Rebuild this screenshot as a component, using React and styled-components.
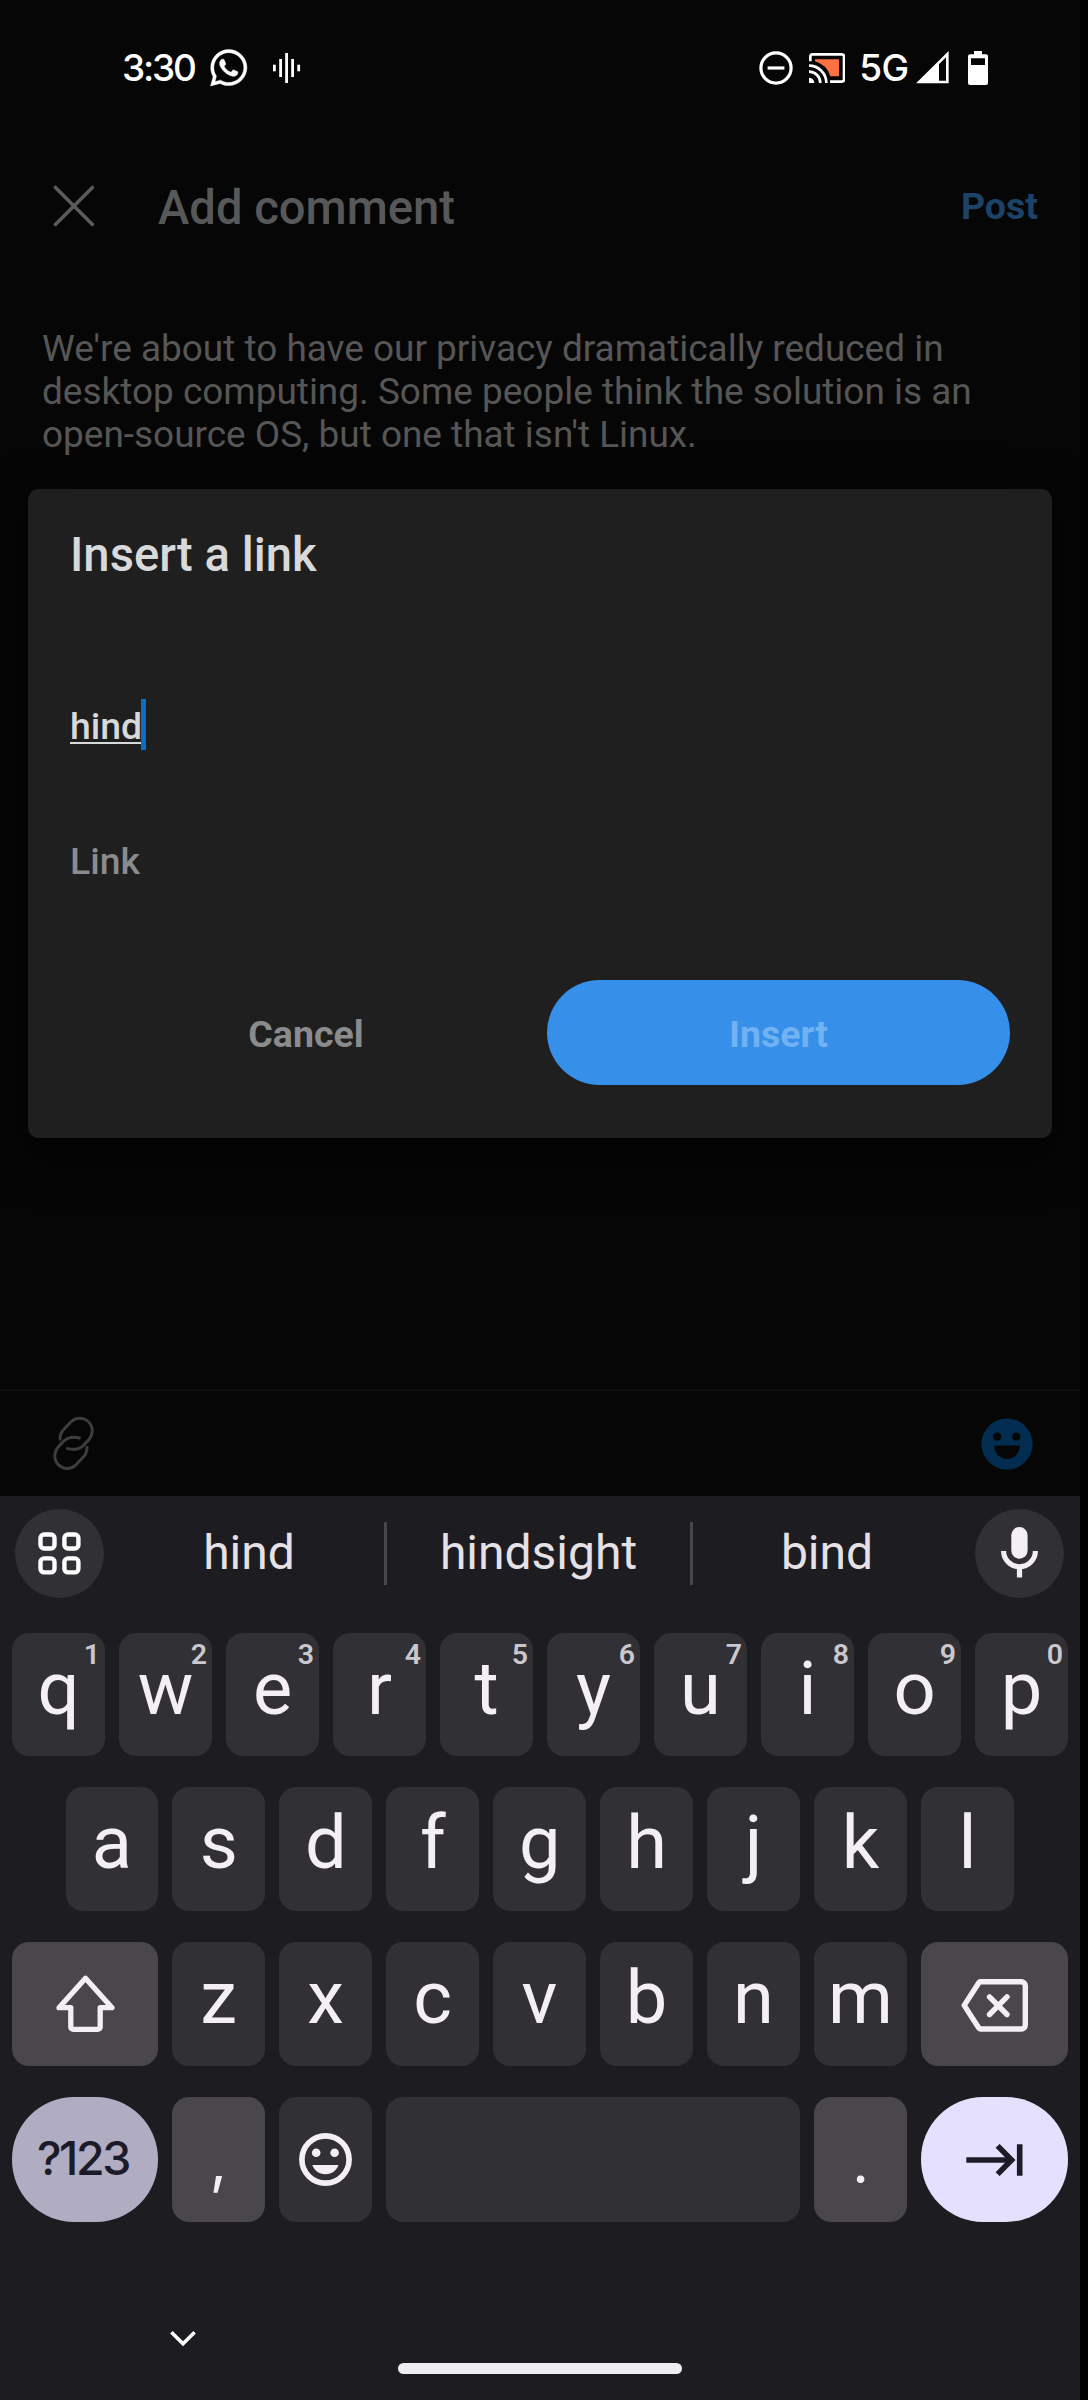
import React from "react";
import styled, { createGlobalStyle } from "styled-components";
import { FaWhatsapp } from "react-icons/fa";

const GlobalStyle = createGlobalStyle`
  body { margin: 0; background: #000; }
  * { box-sizing: border-box; }
  button { border: 0; padding: 0; margin: 0; background: none; font: inherit; color: inherit; }
  svg { display: block; flex: none; }
`;

const Screen = styled.div`
  position: relative;
  display: flex;
  flex-direction: column;
  width: 1080px;
  height: 2400px;
  overflow: hidden;
  background: #060606;
  font-family: Roboto, "Liberation Sans", sans-serif;
`;

/* Status bar */
const StatusBar = styled.header`
  display: flex;
  align-items: center;
  justify-content: space-between;
  height: 135px;
  padding: 0 92px 0 122px;
  color: #fff;
`;

const StatusGroup = styled.div`
  display: flex;
  align-items: center;
  font: 500 37px/40px Inter, Roboto, sans-serif;
`;

const Clock = styled.span`
  width: 86px;
  letter-spacing: -2.2px;
`;

const NetworkType = styled.span`
  width: 57px;
  letter-spacing: -0.8px;
`;

const StatusIcon = styled.span`
  display: flex;
  margin-right: ${(p) => p.$gap || 0}px;
`;

/* Comment screen */
const TitleBar = styled.div`
  display: flex;
  align-items: center;
  height: 141px;
  padding: 0 42px 0 53px;
`;

const Title = styled.h1`
  flex: 1;
  margin: 4px 0 0 63px;
  color: #575859;
  font-size: 47.2px;
  font-weight: 500;
  line-height: 56px;
`;

const PostButton = styled.button`
  color: #1c4267;
  font-size: 37.5px;
  font-weight: 700;
  line-height: 44px;
`;

const Comment = styled.p`
  flex: 1;
  margin: 0;
  padding: 51px 42px 0;
  color: #565656;
  font-size: 36.95px;
  line-height: 43px;
`;

const Attachments = styled.div`
  display: flex;
  align-items: center;
  justify-content: space-between;
  height: 107px;
  padding: 0 47px 0 52px;
  border-top: 2px solid #0e0e0e;
`;

/* Dialog */
const Dialog = styled.section`
  position: absolute;
  top: 489px;
  left: 28px;
  display: flex;
  flex-direction: column;
  width: 1024px;
  height: 649px;
  padding: 38px 42px 53px;
  border-radius: 11px;
  background: #1f1f1f;
  box-shadow: 0 16px 50px rgba(0, 0, 0, 0.7);
`;

const DialogTitle = styled.h2`
  margin: 0;
  color: #d8d9da;
  font-size: 47.2px;
  font-weight: 500;
  line-height: 56px;
`;

const Field = styled.div`
  display: flex;
  align-items: center;
  height: 51px;
  margin-top: ${(p) => p.$top}px;
  color: ${(p) => (p.$placeholder ? "#8a8b8c" : "#d8d9da")};
  font-size: 37.4px;
  font-weight: 500;
  line-height: 47px;
`;

const Typed = styled.span`
  align-self: flex-start;
  height: 45px;
  border-bottom: 2px solid #d8d9da;
  line-height: 54px;
`;

const Caret = styled.span`
  width: 5px;
  height: 51px;
  margin-left: -1px;
  background: #0b6fc4;
`;

const Actions = styled.div`
  display: grid;
  grid-template-columns: 472px 463px;
  gap: 5px;
  height: 105px;
  margin-top: auto;
`;

const ActionButton = styled.button`
  padding-top: 3px;
  border-radius: 53px;
  background: ${(p) => (p.$primary ? "#368fe9" : "transparent")};
  color: ${(p) => (p.$primary ? "#72b1f2" : "#8a8b8c")};
  font-size: 37.5px;
  font-weight: 700;
`;

/* Keyboard */
const Keyboard = styled.section`
  display: flex;
  flex-direction: column;
  height: 904px;
  padding-top: 13px;
  background: #1d1c20;
  color: #f3eff5;
`;

const Suggestions = styled.div`
  display: flex;
  align-items: center;
  height: 89px;
  margin-bottom: 35px;
  padding: 0 16px 0 15px;
`;

const RoundButton = styled.button`
  display: flex;
  align-items: center;
  justify-content: center;
  width: 89px;
  height: 89px;
  border-radius: 50%;
  background: #313035;
`;

const Words = styled.div`
  flex: 1;
  display: grid;
  grid-template-columns: 270px 309px 268px;
  height: 63px;
  margin: 0 14px 0 10px;
`;

const Word = styled.span`
  display: flex;
  align-items: center;
  justify-content: center;
  padding-bottom: 2px;
  border: solid #47464a;
  border-width: 0 ${(p) => (p.$divided ? 3 : 0)}px;
  color: #e6e1e7;
  font-size: 48px;
`;

const Row = styled.div`
  display: flex;
  gap: 14px;
  height: ${(p) => p.$height}px;
  margin-bottom: 31px;
  padding: 0 ${(p) => p.$right || 12}px 0 ${(p) => p.$left || 12}px;
`;

const tones = {
  plain: { background: "#313035", color: "#f3eff5" },
  soft: { background: "#49464c", color: "#f3eff5" },
  muted: { background: "#b0adc3", color: "#1d1b28" },
  accent: { background: "#e6e0ff", color: "#1f1c29" },
};

const Key = styled.button`
  position: relative;
  display: flex;
  align-items: ${(p) => (p.$centered ? "center" : "flex-start")};
  justify-content: center;
  flex: ${(p) => p.$grow || 93} 1 0;
  height: 100%;
  border-radius: ${(p) => (p.$pill ? 62 : 17)}px;
  background: ${(p) => tones[p.$tone || "plain"].background};
  color: ${(p) => tones[p.$tone || "plain"].color};
`;

const Letter = styled.span`
  font-size: 74px;
  line-height: 111px;
`;

const Punctuation = styled.span`
  font: 400 60px/127px ${(p) => p.$family}, sans-serif;
`;

const Symbols = styled.span`
  margin-left: -4px;
  padding-bottom: 3px;
  letter-spacing: -2.4px;
  font: 500 46.5px/60px Inter, Roboto, sans-serif;
`;

const Hint = styled.span`
  position: absolute;
  top: 4px;
  right: 5px;
  color: #cac7ce;
  font-size: 28.5px;
  font-weight: 600;
  line-height: 35px;
`;

const NavBar = styled.div`
  display: grid;
  grid-template-columns: 398px 284px 1fr;
  flex: 1;
  padding-top: 77px;
`;

const HideKeyboard = styled.button`
  display: flex;
  padding-left: 169px;
`;

const HomeIndicator = styled.div`
  height: 11px;
  margin-top: 33px;
  border-radius: 6px;
  background: #eeedef;
`;

const SoundBars = () => (
  <svg width="28" height="30" fill="#fff">
    <rect x="0" y="11.7" width="2.8" height="6.6" />
    <rect x="6.2" y="6" width="2.8" height="18" />
    <rect x="12.2" y="0" width="2.8" height="30" />
    <rect x="18.2" y="6" width="2.8" height="18" />
    <rect x="24.3" y="11.7" width="2.8" height="6.6" />
  </svg>
);

const DoNotDisturb = () => (
  <svg width="34" height="34" fill="none" stroke="#fff" strokeWidth="3.2">
    <circle cx="17" cy="17" r="15.1" />
    <path d="M8.6 17h16.8" />
  </svg>
);

const Cast = () => (
  <svg width="36.7" height="30" viewBox="0 0 110 90" fill="none" stroke="#fff" strokeWidth="8">
    <path d="M18 19H90V70H64A67 67 0 0 0 18 25Z" fill="#ff7143" stroke="none" />
    <path d="M4 25V11a7 7 0 0 1 7-7H98a7 7 0 0 1 7 7V79a7 7 0 0 1-7 7H63" />
    <path d="M0 38A52 52 0 0 1 52 90M0 56A34 34 0 0 1 34 90" />
    <path d="M0 74A16 16 0 0 1 16 90H0Z" fill="#fff" stroke="none" />
  </svg>
);

const Signal = () => (
  <svg width="32.7" height="32.3" viewBox="0 0 98 97" fill="#fff" fillRule="evenodd">
    <path d="M0 97L98 0V97ZM69 40V89H90V19Z" />
  </svg>
);

const Battery = () => (
  <svg width="20" height="34" viewBox="0 0 60 102" fill="#fff" fillRule="evenodd">
    <path d="M18 0H42V10H54a6 6 0 0 1 6 6V96a6 6 0 0 1-6 6H6a6 6 0 0 1-6-6V16a6 6 0 0 1 6-6H18ZM9 22V42H51V22Z" />
  </svg>
);

const CloseIcon = () => (
  <svg width="42" height="42" stroke="#5a5b5c" strokeWidth="3.5" strokeLinecap="round">
    <path d="M2.4 2.4L39.4 39.4M39.4 2.4L2.4 39.4" />
  </svg>
);

const chain =
  "M8 24.3C8 20 9 17.5 11 15.3L19 6.8C22 4 24.5 3.2 27.5 3.2C34.5 3.2 40.2 8.5 40.2 15.5C40.2 19 39 22 37 24.5L31 30.8C26.5 34.5 21 35 15.5 33.6";

const LinkIcon = () => (
  <svg width="43" height="57" fill="none" stroke="#3c3d3d" strokeWidth="3" strokeLinecap="round">
    <path d={chain} />
    <path d={chain} transform="rotate(180 21.5 28.3)" />
  </svg>
);

const SmileFilled = () => (
  <svg width="52" height="52" fill="#060606">
    <circle cx="26" cy="26" r="25.6" fill="#022d51" />
    <circle cx="16.2" cy="18.6" r="4.2" />
    <circle cx="35.2" cy="18.6" r="4.2" />
    <path d="M13.3 27.6H38.7C38.7 35 34 41 26 41S13.3 35 13.3 27.6Z" />
  </svg>
);

const GridIcon = () => (
  <svg width="43" height="43" fill="none" stroke="#fff" strokeWidth="4.4">
    {[2.5, 26.4].map((x) =>
      [2.5, 26.4].map((y) => <rect key={`${x}-${y}`} x={x} y={y} width="14" height="14" rx="3.6" />)
    )}
  </svg>
);

const MicIcon = () => (
  <svg width="37" height="53" fill="#f3eff5">
    <rect x="10.3" y="0" width="16.3" height="31.7" rx="8.15" />
    <path d="M2.6 24A15.9 15.7 0 0 0 34.4 24" fill="none" stroke="#f3eff5" strokeWidth="5.1" />
    <rect x="15.9" y="40" width="5.2" height="10.5" />
  </svg>
);

const ShiftIcon = () => (
  <svg width="59" height="58" fill="none" stroke="#f3eff5" strokeWidth="5.3" strokeLinejoin="round">
    <path d="M29.5 3.2L56 32.7H44.2V52a2.4 2.4 0 0 1-2.4 2.4H17.2A2.4 2.4 0 0 1 14.8 52V32.7H3Z" />
  </svg>
);

const BackspaceIcon = () => (
  <svg width="67" height="50" fill="none" stroke="#f3eff5" strokeWidth="5.4" strokeLinejoin="round" strokeLinecap="round" overflow="visible">
    <path d="M19.5 2.8H60.3a4 4 0 0 1 4 4V46a4 4 0 0 1-4 4H19.5a2 2 0 0 1-1.7-.9L3.2 26.4L17.8 3.7A2 2 0 0 1 19.5 2.8Z" />
    <path d="M28.5 17.8L46 35.5M46 17.8L28.5 35.5" />
  </svg>
);

const SmileOutline = () => (
  <svg width="53" height="53" fill="#f3eff5">
    <circle cx="26.5" cy="26.5" r="23.6" fill="none" stroke="#f3eff5" strokeWidth="5.6" />
    <circle cx="17.2" cy="19.7" r="4.3" />
    <circle cx="35.6" cy="19.7" r="4.3" />
    <path d="M13.3 32H39.5C37.5 37.5 33 41.2 26.4 41.2S15.3 37.5 13.3 32Z" />
  </svg>
);

const TabIcon = () => (
  <svg width="57" height="32" fill="none" stroke="#1f1c29" strokeWidth="5.3">
    <path d="M.3 16H45" />
    <path d="M31.6 1.9L45.6 16L31.6 30.1M53.7 .2V31.8" strokeWidth="5.6" />
  </svg>
);

const ChevronDown = () => (
  <svg width="28" height="18" fill="none" stroke="#fff" strokeWidth="3.6">
    <path d="M2.4 2.2L14 13.8L25.6 2.2" />
  </svg>
);

const topRow = [..."qwertyuiop"];
const homeRow = [..."asdfghjkl"];
const bottomRow = [..."zxcvbnm"];

const LetterKey = ({ label, hint }) => (
  <Key>
    <Letter>{label}</Letter>
    {hint && <Hint>{hint}</Hint>}
  </Key>
);

export default function App() {
  return (
    <>
      <GlobalStyle />
      <Screen>
        <StatusBar>
          <StatusGroup>
            <Clock>3:30</Clock>
            <StatusIcon $gap={23}>
              <FaWhatsapp size={41.5} stroke="currentColor" strokeWidth={6} />
            </StatusIcon>
            <SoundBars />
          </StatusGroup>
          <StatusGroup>
            <StatusIcon $gap={16}><DoNotDisturb /></StatusIcon>
            <StatusIcon $gap={14}><Cast /></StatusIcon>
            <NetworkType>5G</NetworkType>
            <StatusIcon $gap={19}><Signal /></StatusIcon>
            <Battery />
          </StatusGroup>
        </StatusBar>

        <TitleBar>
          <CloseIcon />
          <Title>Add comment</Title>
          <PostButton>Post</PostButton>
        </TitleBar>
        <Comment>
          We're about to have our privacy dramatically reduced in<br />
          desktop computing. Some people think the solution is an<br />
          open-source OS, but one that isn't Linux.
        </Comment>
        <Attachments>
          <LinkIcon />
          <SmileFilled />
        </Attachments>

        <Keyboard>
          <Suggestions>
            <RoundButton><GridIcon /></RoundButton>
            <Words>
              <Word>hind</Word>
              <Word $divided>hindsight</Word>
              <Word>bind</Word>
            </Words>
            <RoundButton><MicIcon /></RoundButton>
          </Suggestions>
          <Row $height={123}>
            {topRow.map((c, i) => <LetterKey key={c} label={c} hint={String((i + 1) % 10)} />)}
          </Row>
          <Row $height={124} $left={65.5} $right={66}>
            {homeRow.map((c) => <LetterKey key={c} label={c} />)}
          </Row>
          <Row $height={124}>
            <Key $tone="soft" $grow={146} $centered><ShiftIcon /></Key>
            {bottomRow.map((c) => <LetterKey key={c} label={c} />)}
            <Key $tone="soft" $grow={147} $centered><BackspaceIcon /></Key>
          </Row>
          <Row $height={125}>
            <Key $tone="muted" $grow={146} $pill $centered><Symbols>?123</Symbols></Key>
            <Key $tone="soft"><Punctuation $family="Inter">,</Punctuation></Key>
            <Key $centered><SmileOutline /></Key>
            <Key $grow={414} />
            <Key $tone="soft"><Punctuation $family="Lato">.</Punctuation></Key>
            <Key $tone="accent" $grow={147} $pill $centered><TabIcon /></Key>
          </Row>
          <NavBar>
            <HideKeyboard><ChevronDown /></HideKeyboard>
            <HomeIndicator />
          </NavBar>
        </Keyboard>

        <Dialog>
          <DialogTitle>Insert a link</DialogTitle>
          <Field $top={116}>
            <Typed>hind</Typed>
            <Caret />
          </Field>
          <Field $top={86} $placeholder>Link</Field>
          <Actions>
            <ActionButton>Cancel</ActionButton>
            <ActionButton $primary>Insert</ActionButton>
          </Actions>
        </Dialog>
      </Screen>
    </>
  );
}
